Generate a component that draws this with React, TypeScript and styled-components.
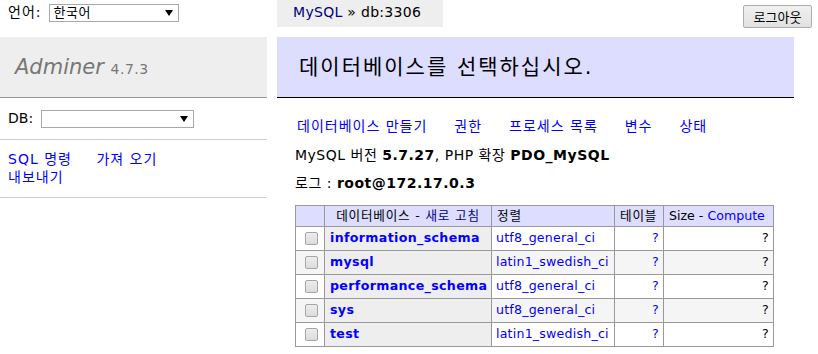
import styled, { createGlobalStyle } from "styled-components";

const GlobalStyle = createGlobalStyle`
	body {
		margin: 0;
		background: #fff;
		color: #000;
		font: 14px/1.25 "DejaVu Sans", "Noto Sans CJK KR", sans-serif;
	}
`;

const TopBar = styled.div`
	display: flex;
	align-items: flex-start;
	height: 37px;
`;

const LangForm = styled.div`
	display: flex;
	align-items: center;
	gap: 8px;
	width: 261px;
	height: 26px;
	padding: 0 8px;
	letter-spacing: 1px;
`;

const FakeSelect = styled.div<{ $w: number }>`
	display: flex;
	align-items: center;
	justify-content: space-between;
	box-sizing: border-box;
	width: ${(p) => p.$w}px;
	height: 18px;
	padding: 0 5px 0 3px;
	border: 1px solid #a9a9a9;
	background: #fff;
	font-size: 13px;
	line-height: 16px;
	letter-spacing: 0.5px;
`;

const Breadcrumb = styled.div`
	background: #eee;
	height: 27px;
	line-height: 25px;
	padding: 0 22px 0 16px;
	white-space: nowrap;
	letter-spacing: 0.3px;
`;

const LogoutButton = styled.button`
	margin: 5px 6px 0 auto;
	width: 69px;
	height: 23px;
	padding: 0;
	border: 1px solid #adadad;
	border-radius: 2px;
	background: linear-gradient(#f0f0f0, #e1e1e1);
	font: 13px "Noto Sans CJK KR", sans-serif;
	color: #000;
`;

const Link = styled.a<{ $visited?: boolean; $bold?: boolean }>`
	color: ${(p) => (p.$visited ? "navy" : "blue")};
	font-weight: ${(p) => (p.$bold ? "bold" : "normal")};
	text-decoration: none;
`;

const Main = styled.div`
	display: flex;
	align-items: flex-start;
`;

const Menu = styled.div`
	width: 267px;
	flex-shrink: 0;
`;

const Logo = styled.h1`
	margin: 0;
	height: 26px;
	padding: 17px 15px;
	background: #eee;
	border-bottom: 1px solid #999;
	font-size: 21px;
	line-height: 26px;
	font-weight: normal;
	color: #777;
`;

const LogoName = styled.span`
	font-style: italic;
`;

const Version = styled.span`
	font-size: 14px;
	letter-spacing: 0.5px;
`;

const MenuSection = styled.div<{ $row?: boolean }>`
	display: ${(p) => (p.$row ? "flex" : "block")};
	align-items: center;
	gap: 8px;
	min-height: 19px;
	padding: 11px 8px;
	border-bottom: 1px solid #ccc;
	line-height: ${(p) => (p.$row ? "19px" : "17.5px")};
`;

const MenuLink = styled(Link)`
	margin-right: 20px;
	white-space: nowrap;
	letter-spacing: 1px;
`;

const Content = styled.div`
	margin-left: 10px;
	width: 517px;
`;

const Title = styled.h2`
	margin: 0;
	height: 26px;
	padding: 17px 22px;
	background: #ddf;
	border-bottom: 1px solid #000;
	font-size: 21px;
	line-height: 26px;
	font-weight: normal;
	letter-spacing: 2px;
	white-space: nowrap;
`;

const Body = styled.div`
	padding: 20px 0 8px 18px;
`;

const Para = styled.p`
	margin: 11px 0 0;
	line-height: 17.5px;
	letter-spacing: 0.5px;
	white-space: nowrap;
	&:first-child {
		margin-top: 0;
		padding-left: 2px;
	}
`;

const NavLink = styled(Link)`
	margin-right: 22px;
	letter-spacing: 1px;
`;

const DbTable = styled.table`
	margin-top: 12px;
	border-collapse: collapse;
	table-layout: fixed;
	width: 479px;
	font-size: 12.6px;
	line-height: 15.75px;
`;

const Col = styled.col<{ $w: number }>`
	width: ${(p) => p.$w}px;
`;

const HeadCell = styled.td<{ $center?: boolean; $latin?: boolean }>`
	height: 16px;
	padding: 2px 5px;
	border: 1px solid #999;
	background: #ddf;
	text-align: ${(p) => (p.$center ? "center" : "left")};
	white-space: nowrap;
	letter-spacing: ${(p) => (p.$latin ? "0" : "0.8px")};
`;

const Row = styled.tr<{ $even: boolean }>`
	background: ${(p) => (p.$even ? "#f5f5f5" : "#fff")};
`;

const Cell = styled.td<{ $right?: boolean }>`
	height: 19px;
	padding: 2px 4px;
	border: 1px solid #999;
	text-align: ${(p) => (p.$right ? "right" : "left")};
	white-space: nowrap;
	letter-spacing: 0.2px;
`;

const NameCell = styled.th`
	height: 19px;
	padding: 2px 5px;
	border: 1px solid #999;
	background: #eee;
	text-align: left;
	letter-spacing: 0.35px;
	white-space: nowrap;
	overflow: hidden;
`;

const Check = styled.input`
	appearance: none;
	display: block;
	width: 13px;
	height: 13px;
	margin: 0 0 0 5px;
	border: 1px solid #a6a6a6;
	border-radius: 2px;
	background: linear-gradient(#ededed, #dcdcdc);
`;

const Arrow = () => (
	<svg width="8" height="6" viewBox="0 0 8 6">
		<path d="M0 0h8L4 6z" fill="#000" />
	</svg>
);

const dbs = [
	{ name: "information_schema", coll: "utf8_general_ci" },
	{ name: "mysql", coll: "latin1_swedish_ci" },
	{ name: "performance_schema", coll: "utf8_general_ci" },
	{ name: "sys", coll: "utf8_general_ci" },
	{ name: "test", coll: "latin1_swedish_ci" },
];

function App() {
	return (
		<>
			<GlobalStyle />
			<TopBar>
				<LangForm>
					<span>언어:</span>
					<FakeSelect $w={130}>
						<span>한국어</span>
						<Arrow />
					</FakeSelect>
				</LangForm>
				<Breadcrumb>
					<Link $visited>MySQL</Link> » db:3306
				</Breadcrumb>
				<LogoutButton>로그아웃</LogoutButton>
			</TopBar>
			<Main>
				<Menu>
					<Logo>
						<LogoName>Adminer</LogoName> <Version>4.7.3</Version>
					</Logo>
					<MenuSection $row>
						<span>DB:</span>
						<FakeSelect $w={153}>
							<span />
							<Arrow />
						</FakeSelect>
					</MenuSection>
					<MenuSection>
						<MenuLink>SQL 명령</MenuLink> <MenuLink>가져 오기</MenuLink>
						<br />
						<MenuLink>내보내기</MenuLink>
					</MenuSection>
				</Menu>
				<Content>
					<Title>데이터베이스를 선택하십시오.</Title>
					<Body>
						<Para>
							<NavLink>데이터베이스 만들기</NavLink> <NavLink>권한</NavLink>{" "}
							<NavLink>프로세스 목록</NavLink> <NavLink>변수</NavLink>{" "}
							<NavLink>상태</NavLink>
						</Para>
						<Para>
							MySQL 버전 <b>5.7.27</b>, PHP 확장 <b>PDO_MySQL</b>
						</Para>
						<Para>
							로그 : <b>root@172.17.0.3</b>
						</Para>
						<DbTable>
							<colgroup>
								<Col $w={29} />
								<Col $w={167} />
								<Col $w={123} />
								<Col $w={49} />
								<Col $w={110} />
							</colgroup>
							<thead>
								<tr>
									<HeadCell />
									<HeadCell $center>
										데이터베이스 - <Link $visited>새로 고침</Link>
									</HeadCell>
									<HeadCell>정렬</HeadCell>
									<HeadCell>테이블</HeadCell>
									<HeadCell $latin>
										Size - <Link>Compute</Link>
									</HeadCell>
								</tr>
							</thead>
							<tbody>
								{dbs.map((db, i) => (
									<Row key={db.name} $even={i % 2 === 1}>
										<Cell>
											<Check type="checkbox" />
										</Cell>
										<NameCell>
											<Link $bold>{db.name}</Link>
										</NameCell>
										<Cell>
											<Link>{db.coll}</Link>
										</Cell>
										<Cell $right>
											<Link>?</Link>
										</Cell>
										<Cell $right>?</Cell>
									</Row>
								))}
							</tbody>
						</DbTable>
					</Body>
				</Content>
			</Main>
		</>
	);
}

export default App;
